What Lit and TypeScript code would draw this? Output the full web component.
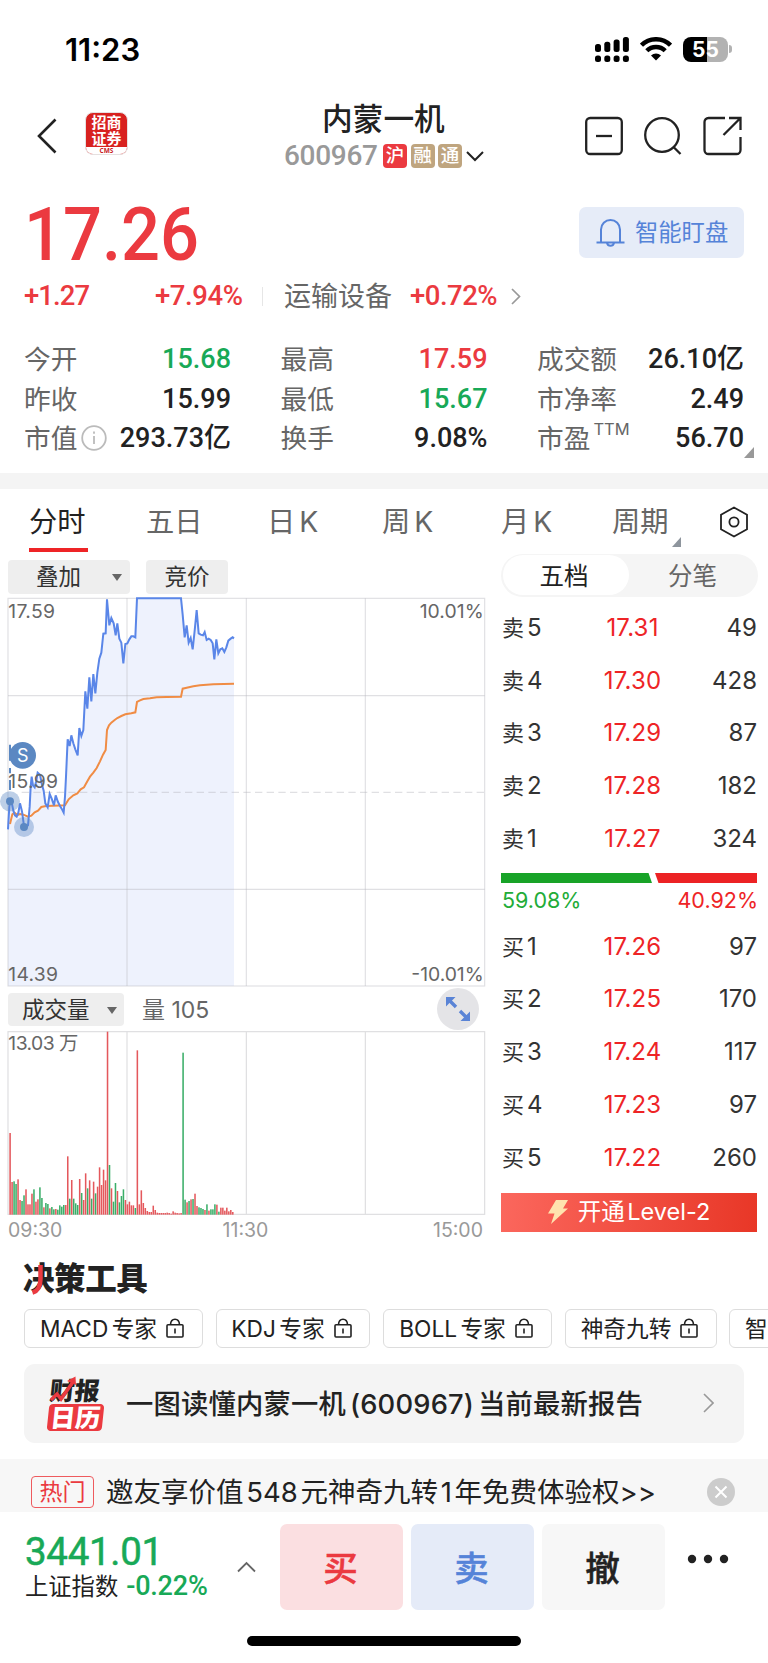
import { LitElement, html, svg, css } from "lit";
import { customElement } from "lit/decorators.js";
import { classMap } from "lit/directives/class-map.js";

type Level = { side: string; n: number; price: string; vol: number };

const asks: Level[] = [
  { side: "卖", n: 5, price: "17.31", vol: 49 },
  { side: "卖", n: 4, price: "17.30", vol: 428 },
  { side: "卖", n: 3, price: "17.29", vol: 87 },
  { side: "卖", n: 2, price: "17.28", vol: 182 },
  { side: "卖", n: 1, price: "17.27", vol: 324 },
];
const bids: Level[] = [
  { side: "买", n: 1, price: "17.26", vol: 97 },
  { side: "买", n: 2, price: "17.25", vol: 170 },
  { side: "买", n: 3, price: "17.24", vol: 117 },
  { side: "买", n: 4, price: "17.23", vol: 97 },
  { side: "买", n: 5, price: "17.22", vol: 260 },
];

// Per-minute price line, in thirds of a pixel.
const priceLine =
  "24,718 28,650 31,634 36,642 40,662 45,676 50,680 55,668 60,640 66,664 72,708 78,712 84,706 89,650 92,590 95,560 99,586 104,592 108,576 113,548 120,554 126,584 131,602 136,640 143,652 149,612 155,626 162,646 167,616 174,636 180,648 185,656 191,668 195,620 198,560 203,448 209,468 214,436 220,460 226,478 233,496 238,414 244,438 250,420 256,304 262,356 268,262 274,334 280,252 286,310 292,248 298,206 304,188 310,131 317,130 321,28 328,106 334,84 341,100 347,136 352,100 358,146 364,158 370,220 376,162 382,160 388,148 394,139 400,139 406,142 411,25 543,25 548,74 554,142 560,106 566,158 572,144 578,178 584,122 590,60 596,130 602,134 609,136 614,126 620,150 626,146 632,150 638,160 643,208 649,148 655,190 661,178 667,175 673,186 679,172 685,152 692,146 698,142 702,145";
const avgLine =
  "30,702 37,673 44,668 52,675 60,672 70,674 84,680 94,677 104,667 114,662 124,651 138,648 160,647 195,646 206,628 220,616 232,610 242,598 252,592 262,574 270,560 280,548 290,534 300,514 309,494 317,480 321,420 327,406 334,398 344,390 352,384 364,378 376,373 394,370 406,367 411,336 420,331 430,327 450,325 470,322 500,321 543,320 548,296 560,293 580,289 600,286 640,283 702,281";

// Volume bar tops and direction, one pair per minute; baseline is 703.
const volumes =
  "459r 606r 604g 612g 598r 660r 663g 646g 628r 673r 673r 641r 628g 665r 658r 622g 654g 682r 669g 672g 685r 681g 688g 687r 689g 676g 680g 675g 675r 529r 656g 600r 656g 670g 675g 597r 639g 660r 580r 625g 601r 656g 605r 640g 620r 562r 615r 569r 601r 155r 555g 625r 665g 609g 633r 667g 648g 628g 660r 673r 665r 676r 676r 684g 211r 673r 631r 669r 684r 693r 696r 696r 677r 690r 698r 699r 699r 699r 699r 698r 699r 701r 694r 698r 699r 700r 699r 218g 659g 667r 663g 658r 657g 641r 678r 682g 684g 687g 690r 673g 692r 688g 688g 673g 674r 695g 683r 683r 692r 683r 694r 690r 696r"
    .split(" ")
    .map((v) => ({ top: parseInt(v, 10), up: v.endsWith("r") }));

const gridX = [381, 739, 1096];

const lock = svg`<svg class="lock" width="18" height="20" viewBox="0 0 18 20" fill="none" stroke="#222" stroke-width="1.600"><rect x="1" y="6.800" width="16" height="12.200" rx="1"/><path d="M4.500 6.500C4.700 3.200 6.500 1.200 9 1.200s4.300 2 4.500 5.300M9 10.500v5"/></svg>`;

@customElement("app-root")
export class AppRoot extends LitElement {
  static styles = css`
    :host {
      display: block;
      width: 768px;
      height: 1663px;
      overflow: hidden;
      background: #fff;
      color: #222;
      font-family: Inter, "Noto Sans CJK SC", sans-serif;
      white-space: nowrap;
      line-height: 1;
    }
    * { box-sizing: border-box; }
    svg { display: block; flex: none; }
    .din { font-family: Roboto, "Noto Sans CJK SC", sans-serif; }
    .red { color: #eb3a40; }
    .green { color: #18a957; }

    .status { height: 98px; padding: 0 36px 0 65px; display: flex; align-items: center; }
    .clock { font-size: 31px; font-weight: 600; color: #000; flex: 1; letter-spacing: 0; }
    .signals { display: flex; gap: 11px; align-items: center; }
    .battery { display: flex; align-items: center; gap: 1px; }
    .cell { width: 45px; height: 25px; border-radius: 8px; background: linear-gradient(90deg, #000 54%, #b2b2b2 54%); color: #fff; font-size: 21px; font-weight: 700; display: flex; align-items: center; justify-content: center; }
    .nub { width: 3px; height: 8px; border-radius: 0 4px 4px 0; background: #b2b2b2; }

    .nav { height: 92px; display: grid; grid-template-columns: 285px 1fr 184px; }
    .nav-left { display: flex; padding: 12px 0 0 37px; gap: 28px; align-items: flex-start; }
    .back { margin-top: 8px; }
    .logo { width: 43px; height: 43px; border-radius: 8px; background: #d8211f; border: 1px solid #e6e0e0; display: flex; flex-direction: column; overflow: hidden; color: #fff; font-family: "Noto Sans CJK SC", sans-serif; font-weight: 700; font-size: 15px; line-height: 16px; text-align: center; margin-top: 2px; }
    .logo-name { height: 34px; padding-top: 1px; }
    .logo-cms { flex: 1; background: #fff; color: #c8201f; font-size: 6.500px; line-height: 7px; font-family: "Open Sans", sans-serif; }
    .title { font-size: 30.700px; font-weight: 500; line-height: 34px; padding: 4px 0 0 37px; }
    .sub { display: flex; align-items: center; height: 32px; margin-top: 4px; margin-left: -1px; }
    .code { font-size: 28px; color: #999; width: 99px; font-weight: 500; letter-spacing: -0.300px; }
    .tag { width: 24px; height: 24px; border-radius: 4px; background: #bfa57f; color: #fff; font-size: 18.500px; font-weight: 500; line-height: 23px; text-align: center; margin-right: 3.500px; }
    .tag.sh { background: #eb3a40; }
    .chev { margin-left: 0; }
    .nav-icons { display: flex; gap: 21px; padding: 18px 0 0 1px; }

    .quote { height: 78px; display: flex; justify-content: space-between; padding: 17px 24px 0; }
    .price { font-size: 75px; font-weight: 500; line-height: 54px; width: 190px; transform: scaleX(0.915); transform-origin: left; }
    .watch { width: 165px; height: 51px; border-radius: 7px; background: #e6ecf8; color: #5583d8; display: flex; align-items: center; gap: 10px; padding-left: 17px; font-size: 23.300px; }
    .change { height: 56px; display: flex; align-items: center; padding: 0 24px; font-size: 27.500px; letter-spacing: -0.500px; }
    .change .chg { width: 131px; font-weight: 500; letter-spacing: -0.900px; }
    .change .pct { width: 107px; font-weight: 500; letter-spacing: -0.400px; }
    .divider { width: 1px; height: 19px; background: #e6e6e6; }
    .sector { color: #666; margin-left: 21px; width: 126px; font-size: 27px; letter-spacing: 0; }
    .sec-pct { font-weight: 500; letter-spacing: -0.500px; width: 101px; }

    .stats { height: 149px; padding: 16px 24px 0; display: grid; grid-template-columns: 207px 207px 207px; column-gap: 49.500px; grid-auto-rows: 39.400px; position: relative; }
    .stat { display: flex; align-items: center; justify-content: space-between; font-size: 27px; }
    .stat .k { color: #666; display: flex; align-items: center; gap: 4px; font-size: 26.700px; }
    .stat .v { font-weight: 500; letter-spacing: 0; }
    .stat .ttm { font-size: 16.500px; align-self: flex-start; margin-top: -4px; margin-left: -1px; }
    .more { position: absolute; right: 14px; bottom: 15px; }
    .band { height: 15.500px; background: #f4f4f4; }

    .tabs { height: 71px; display: flex; position: relative; font-size: 28.300px; color: #666; word-spacing: -4px; padding-left: 29px; }
    .tab { display: flex; flex-direction: column; padding-top: 19px; }
    .tab.on { color: #222; }
    .tab.on::after { content: ""; width: 59px; height: 4px; background: #ee2426; margin-top: 12px; }
    .t0 { width: 117px; } .t1 { width: 121px; } .t2 { width: 115px; } .t3 { width: 119px; } .t4 { width: 111px; } .t5 { width: 107px; }
    .tri { position: absolute; left: 672px; top: 48px; }
    .hex { margin-top: 17px; }

    .market { height: 683px; display: grid; grid-template-columns: 490px 1fr; }
    .tools { height: 30.500px; display: flex; gap: 16px; padding-left: 8px; }
    .pill { height: 34px; background: #eee; border-radius: 4px; font-size: 22.500px; display: flex; align-items: center; justify-content: center; color: #333; padding-top: 1px; }
    .overlay { width: 122px; justify-content: flex-start; padding-left: 28px; gap: 31px; }
    .auction { width: 82px; }
    .indicator { height: 38.500px; margin-top: -1px; display: flex; align-items: center; padding-left: 8px; }
    .turn { width: 116px; justify-content: flex-start; padding-left: 14px; gap: 17px; height: 33px; margin-top: -1px; }
    .amount { margin-left: 18px; color: #666; font-size: 23px; flex: 1; }
    .expand { width: 42px; height: 42px; margin: -2px 11px 0 0; border-radius: 50%; background: #e4e4e7; display: grid; place-items: center; }
    .times { display: grid; grid-template-columns: 1fr 1fr 1fr; padding: 4px 7px 0 8px; font-size: 19.500px; line-height: 20px; color: #999; }
    .times :nth-child(2) { text-align: center; }
    .times :nth-child(3) { text-align: right; }
    .axis { font-size: 58px; fill: #666; font-family: Inter, "Noto Sans CJK SC", sans-serif; }

    .book { padding: 0 11px 0 11px; margin-top: -6px; }
    .seg { height: 43px; border-radius: 22px; background: #f5f5f5; display: grid; grid-template-columns: 126px 1fr; font-size: 24.500px; color: #666; width: 257px; padding: 1.500px; }
    .seg span { display: grid; place-items: center; border-radius: 20px; padding-top: 2px; }
    .seg .sel { background: #fff; color: #222; padding-right: 3px; }
    .level { height: 52.750px; display: grid; grid-template-columns: 90px 84px 1fr; align-items: center; font-size: 24px; color: #333; padding: 0 1px; }
    .level .p { color: #ee2426; text-align: center; letter-spacing: 0.200px; margin-left: -3px; }
    .level .q { text-align: right; }
    .level .s { font-size: 22px; }
    .level .s b { font-weight: 400; font-size: 24px; margin-left: 3px; }
    .asks { padding-top: 5px; }
    .ratio { margin-top: 8px; }
    .pcts { display: flex; justify-content: space-between; font-size: 21.500px; padding: 5px 0 0 1px; line-height: 24px; height: 37px; color: #ee2426; }
    .pcts .up { color: #22ac38; }
    .l2 { height: 39px; width: 256px; margin-top: 8.500px; background: linear-gradient(95deg, #fb675d, #e83727); color: #fff; display: flex; align-items: center; justify-content: center; gap: 10px; font-size: 23.500px; word-spacing: -4px; }

    .section { height: 66px; padding: 19px 23px 0; position: relative; }
    .section h2 { margin: 0; font-size: 31.500px; line-height: 34px; font-weight: 900; letter-spacing: -0.400px; }
    .slash { position: absolute; left: 32px; top: 22px; }
    .chips { display: flex; gap: 13px; padding-left: 24px; height: 55.500px; }
    .chip { height: 39px; border: 1px solid #ddd; border-radius: 6px; font-size: 22.700px; display: flex; align-items: center; justify-content: center; gap: 9px; flex: none; word-spacing: -3px; padding: 2px 3px 0 0; }
    .chip .lock { margin-top: -2px; }
    .c0 { width: 179px; } .c1 { width: 154px; } .c2 { width: 169px; } .c3 { width: 152px; } .c4 { width: 154px; justify-content: flex-start; padding-left: 15px; margin-left: -1px; }
    .report { margin: 0 24px; height: 78.500px; border-radius: 11px; background: #f4f4f4; display: flex; align-items: center; padding: 0 30px 0 24px; }
    .fin { width: 55px; height: 56px; display: flex; flex-direction: column; position: relative; font-family: "Noto Sans CJK SC", sans-serif; font-weight: 900; font-size: 25px; line-height: 28px; margin-right: 23px; }
    .fin span { transform: skewX(-6deg); padding-left: 2px; letter-spacing: 0; }
    .fin .cal { background: #eb3a40; color: #fff; border-radius: 4px; height: 27px; line-height: 25px; text-align: center; padding: 0; margin-top: 1px; }
    .arrow { position: absolute; left: 2px; top: 1px; }
    .headline { flex: 1; font-size: 27.300px; font-weight: 500; letter-spacing: 0.200px; word-spacing: -3.500px; padding-top: 2px; }
    .hot { height: 53px; margin-top: 16px; background: #f7f7f7; display: flex; align-items: center; padding: 14px 33px 0 31px; }
    .badge { width: 63px; height: 32px; border: 1.500px solid #ee5a5e; border-radius: 4px; color: #eb3a40; font-size: 23px; display: grid; place-items: center; margin-right: 12px; }
    .promo { flex: 1; font-size: 27.500px; word-spacing: -5px; padding-top: 2px; }
    .foot { height: 124px; display: flex; padding: 12px 0 0 25px; }
    .index { width: 255px; display: grid; grid-template-columns: 212px 1fr; padding-top: 10px; }
    .pts { font-size: 38.500px; line-height: 36px; letter-spacing: -0.300px; height: 40px; font-weight: 400; -webkit-text-stroke: 0.500px #18a957; }
    .name { font-size: 23.300px; line-height: 26px; display: flex; gap: 8px; }
    .name b { font-weight: 500; font-size: 27px; letter-spacing: -0.200px; margin-top: -1px; }
    .caret { margin-top: 27px; }
    .act { width: 123px; height: 86px; border-radius: 7px; margin-right: 8px; display: grid; place-items: center; font-size: 34.500px; font-weight: 500; font-family: "Noto Sans CJK SC", sans-serif; background: #f7f7f7; padding-right: 2px; -webkit-text-stroke: 0.500px currentColor; }
    .buy { background: #fbdfe1; color: #eb3a40; }
    .sell { background: #e5ebf8; color: #5583d8; }
    .dots { margin: 30px 0 0 14px; }
    .home { width: 274px; height: 10px; border-radius: 5px; background: #000; margin: 0 auto; }
  `;

  private stat(k: unknown, v: string, tone = "") {
    return html`<div class="stat"><span class="k">${k}</span><span class="v din ${tone}">${v}</span></div>`;
  }

  private levels(rows: Level[]) {
    return rows.map(
      (r) => html`<div class="level"><span class="s">${r.side}<b>${r.n}</b></span><span class="p">${r.price}</span><span class="q">${r.vol}</span></div>`
    );
  }

  private priceChart() {
    return html`<svg width="490" height="402" viewBox="0 0 1470 1206">
      <polygon points="24,1188 ${priceLine} 702,1188" fill="#eef2fd" />
      <g stroke="#b4b4bc" stroke-opacity=".42" stroke-width="3.500" fill="none">
        <rect x="24" y="25" width="1430" height="1163" />
        ${gridX.map((x) => svg`<path d="M${x} 25V1188"/>`)}
        <path d="M24 317H1454M24 898H1454" />
        <path d="M65 607H1454" stroke-dasharray="22 13" />
      </g>
      <polyline points=${avgLine} fill="none" stroke="#f08c44" stroke-width="6" />
      <polyline points=${priceLine} fill="none" stroke="#5a86e8" stroke-width="6" />
      <path d="M30 464V600" stroke="#5b88c2" stroke-width="6" stroke-dasharray="48 22 16 20" />
      <g fill="#5b88c2">
        <circle cx="30" cy="634" r="30" fill-opacity=".4" /><circle cx="30" cy="634" r="12" />
        <circle cx="72" cy="711" r="30" fill-opacity=".4" /><circle cx="72" cy="711" r="12" />
        <circle cx="68" cy="496" r="40" />
      </g>
      <text x="68" y="515" text-anchor="middle" font-size="54" fill="#fff" font-family="Inter">S</text>
      <g class="axis">
        <text x="25" y="84" textLength="140">17.59</text>
        <text x="25" y="594" textLength="149">15.99</text>
        <text x="25" y="1173" textLength="149">14.39</text>
        <text x="1451" y="84" text-anchor="end" textLength="192">10.01%</text>
        <text x="1451" y="1173" text-anchor="end" textLength="217">-10.01%</text>
      </g>
    </svg>`;
  }

  private volumeChart() {
    return html`<svg width="490" height="186" viewBox="0 150 1470 558">
      <g stroke="#dedee0" stroke-width="3.500" fill="none">
        <rect x="24" y="155" width="1430" height="548" />
        ${gridX.map((x) => svg`<path d="M${x} 155V703"/>`)}
      </g>
      ${volumes.map(
        (v, i) => svg`<rect x=${28 + i * 5.965} y=${v.top} width="4.600" height=${704 - v.top} fill=${v.up ? "#e4585c" : "#3aae68"}/>`
      )}
      <g class="axis"><text x="25" y="211" textLength="210">13.03 万</text></g>
    </svg>`;
  }

  render() {
    const tabs = ["分时", "五日", "日 K", "周 K", "月 K", "周期"];
    return html`
      <div class="status">
        <span class="clock">11:23</span>
        <div class="signals">
          <svg width="34" height="25" viewBox="0 0 34 25">
            ${[0, 1, 2, 3].map((i) => svg`<rect x=${i * 9.300} y=${7 - i * 2.300} width="6" height=${8 + i * 2.300} rx="2.500"/><rect x=${i * 9.300} y="18.500" width="6" height="6.500" rx="2.500"/>`)}
          </svg>
          <svg width="32" height="24" viewBox="0 0 32 24" fill="none" stroke="#000" stroke-width="4.400">
            <path d="M1.500 8.200a20.500 20.500 0 0 1 29 0" /><path d="M6.800 13.800a13 13 0 0 1 18.400 0" />
            <path d="M16 23.500l-5-5a7.300 7.300 0 0 1 10 0z" fill="#000" stroke="none" />
          </svg>
          <div class="battery"><div class="cell">55</div><div class="nub"></div></div>
        </div>
      </div>

      <div class="nav">
        <div class="nav-left">
          <svg class="back" width="20" height="36" viewBox="0 0 20 36" fill="none" stroke="#222" stroke-width="2.600"><path d="M18.500 1.500L2 18l16.500 16.500" /></svg>
          <div class="logo"><div class="logo-name">招商<br />证券</div><div class="logo-cms">CMS</div></div>
        </div>
        <div>
          <div class="title">内蒙一机</div>
          <div class="sub">
            <span class="code din">600967</span>
            <span class="tag sh">沪</span><span class="tag">融</span><span class="tag">通</span>
            <svg class="chev" width="18" height="11" viewBox="0 0 18 11" fill="none" stroke="#222" stroke-width="2"><path d="M1 1l8 8 8-8" /></svg>
          </div>
        </div>
        <div class="nav-icons">
          <svg width="38" height="40" viewBox="0 0 38 40" fill="none" stroke="#222" stroke-width="2.300"><rect x="1.200" y="2" width="35.600" height="36" rx="4" /><path d="M11 20h16" /></svg>
          <svg width="38" height="40" viewBox="0 0 38 40" fill="none" stroke="#222" stroke-width="2.300"><circle cx="18" cy="19" r="16.800" /><path d="M29.500 31l7 7" /></svg>
          <svg width="40" height="40" viewBox="0 0 40 40" fill="none" stroke="#222" stroke-width="2.300"><path d="M22 2H5.500a4 4 0 0 0-4 4v28a4 4 0 0 0 4 4h28a4 4 0 0 0 4-4V21M26 2h11.500v12M37 2.500L20.500 19" /></svg>
        </div>
      </div>

      <div class="quote">
        <span class="price din red">17.26</span>
        <div class="watch">
          <svg width="29" height="30" viewBox="0 0 29 30" fill="none" stroke="#5583d8" stroke-width="2"><path d="M5 24V11.500a9.500 9.500 0 0 1 19 0V24M.5 24.500h28M11 25a3.600 3.600 0 0 0 7 0" /></svg>
          智能盯盘
        </div>
      </div>
      <div class="change">
        <span class="chg din red">+1.27</span><span class="pct din red">+7.94%</span><i class="divider"></i>
        <span class="sector">运输设备</span><span class="sec-pct din red">+0.72%</span>
        <svg width="10" height="17" viewBox="0 0 10 17" fill="none" stroke="#999" stroke-width="1.700"><path d="M1 1l7.500 7.500L1 16" /></svg>
      </div>
      <div class="stats">
        ${this.stat("今开", "15.68", "green")}${this.stat("最高", "17.59", "red")}${this.stat("成交额", "26.10亿")}
        ${this.stat("昨收", "15.99")}${this.stat("最低", "15.67", "green")}${this.stat("市净率", "2.49")}
        ${this.stat(
          html`市值<svg width="26" height="26" viewBox="0 0 26 26" fill="none" stroke="#bbb" stroke-width="1.800"><circle cx="13" cy="13" r="11.800" /><path d="M13 11v8M13 6.500v2.300" /></svg>`,
          "293.73亿"
        )}${this.stat("换手", "9.08%")}${this.stat(html`市盈<span class="ttm">TTM</span>`, "56.70")}
        <svg class="more" width="10" height="11"><path d="M10 0v11H0z" fill="#999" /></svg>
      </div>
      <div class="band"></div>

      <div class="tabs">
        ${tabs.map((t, i) => html`<div class=${classMap({ tab: true, on: i === 0, ["t" + i]: true })}>${t}</div>`)}
        <svg class="tri" width="9" height="10"><path d="M9 0v10H0z" fill="#8e959d" /></svg>
        <svg class="hex" width="30" height="32" viewBox="0 0 30 32" fill="none" stroke="#222" stroke-width="1.800"><path d="M15 1.500L28 8.800v14.400L15 30.500 2 23.200V8.800z" /><circle cx="15" cy="16" r="4.600" /></svg>
      </div>

      <div class="market">
        <div>
          <div class="tools">
            <div class="pill overlay">叠加<svg width="10" height="7"><path d="M0 0h10L5 7z" fill="#666" /></svg></div>
            <div class="pill auction">竞价</div>
          </div>
          ${this.priceChart()}
          <div class="indicator">
            <div class="pill turn">成交量<svg width="10" height="7"><path d="M0 0h10L5 7z" fill="#666" /></svg></div>
            <span class="amount">量 105</span>
            <div class="expand">
              <svg width="24" height="24" viewBox="0 0 24 24"><g fill="none" stroke="#5a84d6" stroke-width="3.400"><path d="M3 3l7 7M21 21l-7-7" /></g><path d="M0 0h9.500L6.800 2.700 2.700 6.800 0 9.500zM24 24h-9.500l2.700-2.700 4.100-4.100L24 14.500z" fill="#5a84d6" /></svg>
            </div>
          </div>
          ${this.volumeChart()}
          <div class="times"><span>09:30</span><span>11:30</span><span>15:00</span></div>
        </div>
        <div class="book">
          <div class="seg"><span class="sel">五档</span><span>分笔</span></div>
          <div class="asks">${this.levels(asks)}</div>
          <svg class="ratio" width="256" height="10"><path d="M0 0h147.500l3.500 10H0z" fill="#18a328" /><path d="M154 0h102v10h-98.500z" fill="#ec2224" /></svg>
          <div class="pcts"><span class="up">59.08%</span><span>40.92%</span></div>
          <div>${this.levels(bids)}</div>
          <div class="l2">
            <svg width="20" height="24" viewBox="0 0 20 24"><path d="M8 0h12l-5 8.500h5L3 24l3.500-10.500H0z" fill="#ffe3ae" /></svg><span>开通 Level-2</span>
          </div>
        </div>
      </div>

      <div class="section">
        <h2>决策工具</h2>
        <svg class="slash" width="12" height="30" viewBox="0 0 12 30" fill="none" stroke="#eb3a40" stroke-width="4.500"><path d="M8.500 0v14c0 8-2.500 12-8 13.500" /></svg>
      </div>
      <div class="chips">
        ${["MACD 专家", "KDJ 专家", "BOLL 专家", "神奇九转", "智能"].map((c, i) => html`<div class="chip c${i}">${c}${lock}</div>`)}
      </div>
      <div class="report">
        <div class="fin">
          <span>财报</span><span class="cal">日历</span>
          <svg class="arrow" width="28" height="27" viewBox="0 0 28 27" fill="none" stroke="#eb3a40" stroke-width="3.500"><path d="M1 24l6-6 4 5L23 6" /><path d="M17 5l8.500-4.500L26 9z" fill="#eb3a40" stroke="none" /></svg>
        </div>
        <span class="headline">一图读懂内蒙一机 (600967) 当前最新报告</span>
        <svg width="11" height="20" viewBox="0 0 11 20" fill="none" stroke="#999" stroke-width="1.600"><path d="M1 1l9 9-9 9" /></svg>
      </div>
      <div class="hot">
        <span class="badge">热门</span><span class="promo">邀友享价值 548 元神奇九转 1 年免费体验权&gt;&gt;</span>
        <svg width="28" height="28" viewBox="0 0 28 28"><circle cx="14" cy="14" r="14" fill="#ccc" /><path d="M8.500 8.500l11 11m0-11l-11 11" stroke="#fff" stroke-width="2" /></svg>
      </div>
      <div class="foot">
        <div class="index">
          <div><div class="pts din green">3441.01</div><div class="name">上证指数<b class="din green">-0.22%</b></div></div>
          <svg class="caret" width="19" height="12" viewBox="0 0 19 12" fill="none" stroke="#666" stroke-width="1.800"><path d="M1 10.500L9.500 2l8.500 8.500" /></svg>
        </div>
        <div class="act buy">买</div><div class="act sell">卖</div><div class="act">撤</div>
        <svg class="dots" width="42" height="10" fill="#222"><circle cx="5" cy="5" r="4.200" /><circle cx="21" cy="5" r="4.200" /><circle cx="37" cy="5" r="4.200" /></svg>
      </div>
      <div class="home"></div>
    `;
  }
}
